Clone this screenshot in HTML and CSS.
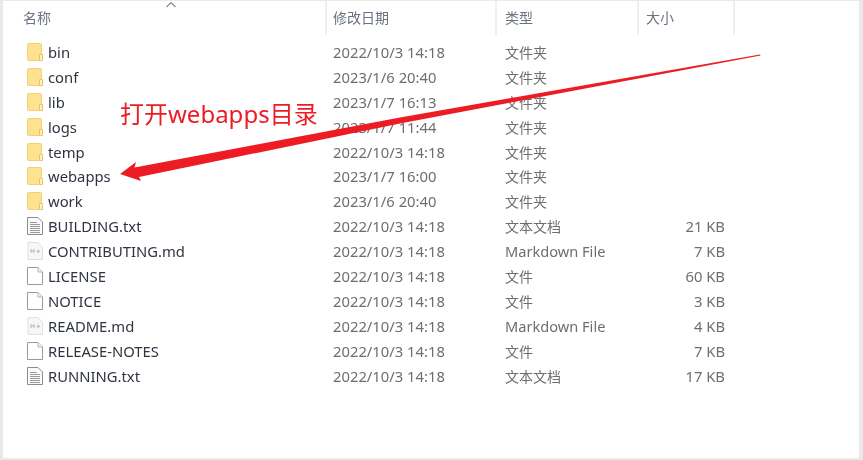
FILE: index.html
```html
<!DOCTYPE html>
<html lang="zh">
<head>
<meta charset="utf-8">
<title>webapps</title>
<link rel="stylesheet" href="styles.css">
</head>
<body>
<svg class="defs" width="0" height="0" aria-hidden="true">
  <symbol id="folder" viewBox="0 0 16 18">
    <path d="M1.5 .5H13.5a1 1 0 0 1 1 1V17.5H1.5a1 1 0 0 1-1-1V1.5a1 1 0 0 1 1-1z" fill="#fde28f" stroke="#f0d078"/>
    <path d="M12.5 17.5V11.5H15.5V17.5z" fill="#fff0c0" stroke="#e8c564"/>
  </symbol>
  <symbol id="txt" viewBox="0 0 16 18">
    <path d="M.5 .5H11L15.5 5V17.5H.5z" fill="#fafafa" stroke="#8d8d8d"/>
    <path d="M3 5.5H10M3 7.5H13M3 9.5H13M3 11.5H13M3 13.5H13M3 15.5H13" stroke="#9a9a9a"/>
  </symbol>
  <symbol id="plain" viewBox="0 0 16 18">
    <path d="M.5 .5H11L15.5 5V17.5H.5z" fill="#fff" stroke="#9a9a9a"/>
    <path d="M11 .5V5H15.5" fill="#f2f2f2" stroke="#b4b4b4"/>
  </symbol>
  <symbol id="md" viewBox="0 0 16 18">
    <path d="M1 .5H11L15.5 5V17.5H1z" fill="#f6f6f6" stroke="#e0e0e0"/>
    <path d="M4 11V7.5L5.5 9.5L7 7.5V11M9.5 9.3H13M11.2 7.6V11" fill="none" stroke="#b5b5b5"/>
  </symbol>
</svg>
<main class="window">
  <header class="head">
    <div class="col-name hcell">名称</div>
    <div class="col-date hcell">修改日期</div>
    <div class="col-type hcell">类型</div>
    <div class="col-size hcell">大小</div>
    <svg class="caret" width="12" height="7" viewBox="0 0 12 7"><path d="M1.5 6L6 1.5L10.500 6" fill="none" stroke="#8a8a8a" stroke-width="1.2"/></svg>
  </header>
  <div class="list">
    <div class="row"><div class="col-name"><svg class="ico"><use href="#folder"/></svg><span>bin</span></div><div class="col-date">2022/10/3 14:18</div><div class="col-type">文件夹</div><div class="col-size"></div></div>
    <div class="row"><div class="col-name"><svg class="ico"><use href="#folder"/></svg><span>conf</span></div><div class="col-date">2023/1/6 20:40</div><div class="col-type">文件夹</div><div class="col-size"></div></div>
    <div class="row"><div class="col-name"><svg class="ico"><use href="#folder"/></svg><span>lib</span></div><div class="col-date">2023/1/7 16:13</div><div class="col-type">文件夹</div><div class="col-size"></div></div>
    <div class="row"><div class="col-name"><svg class="ico"><use href="#folder"/></svg><span>logs</span></div><div class="col-date">2023/1/7 11:44</div><div class="col-type">文件夹</div><div class="col-size"></div></div>
    <div class="row"><div class="col-name"><svg class="ico"><use href="#folder"/></svg><span>temp</span></div><div class="col-date">2022/10/3 14:18</div><div class="col-type">文件夹</div><div class="col-size"></div></div>
    <div class="row"><div class="col-name"><svg class="ico"><use href="#folder"/></svg><span>webapps</span></div><div class="col-date">2023/1/7 16:00</div><div class="col-type">文件夹</div><div class="col-size"></div></div>
    <div class="row"><div class="col-name"><svg class="ico"><use href="#folder"/></svg><span>work</span></div><div class="col-date">2023/1/6 20:40</div><div class="col-type">文件夹</div><div class="col-size"></div></div>
    <div class="row"><div class="col-name"><svg class="ico"><use href="#txt"/></svg><span>BUILDING.txt</span></div><div class="col-date">2022/10/3 14:18</div><div class="col-type">文本文档</div><div class="col-size">21 KB</div></div>
    <div class="row"><div class="col-name"><svg class="ico"><use href="#md"/></svg><span>CONTRIBUTING.md</span></div><div class="col-date">2022/10/3 14:18</div><div class="col-type latin">Markdown File</div><div class="col-size">7 KB</div></div>
    <div class="row"><div class="col-name"><svg class="ico"><use href="#plain"/></svg><span>LICENSE</span></div><div class="col-date">2022/10/3 14:18</div><div class="col-type">文件</div><div class="col-size">60 KB</div></div>
    <div class="row"><div class="col-name"><svg class="ico"><use href="#plain"/></svg><span>NOTICE</span></div><div class="col-date">2022/10/3 14:18</div><div class="col-type">文件</div><div class="col-size">3 KB</div></div>
    <div class="row"><div class="col-name"><svg class="ico"><use href="#md"/></svg><span>README.md</span></div><div class="col-date">2022/10/3 14:18</div><div class="col-type latin">Markdown File</div><div class="col-size">4 KB</div></div>
    <div class="row"><div class="col-name"><svg class="ico"><use href="#plain"/></svg><span>RELEASE-NOTES</span></div><div class="col-date">2022/10/3 14:18</div><div class="col-type">文件</div><div class="col-size">7 KB</div></div>
    <div class="row"><div class="col-name"><svg class="ico"><use href="#txt"/></svg><span>RUNNING.txt</span></div><div class="col-date">2022/10/3 14:18</div><div class="col-type">文本文档</div><div class="col-size">17 KB</div></div>
  </div>
  <div class="note">打开webapps目录</div>
  <svg class="arrow" width="863" height="460" viewBox="0 0 863 460" aria-hidden="true">
    <path d="M120 174L136 162L134.500 167.500L400 117.500L760 54.500L760.500 55.500L400 123.500L139 177L141 181z" fill="#ed1c24"/>
  </svg>
</main>
</body>
</html>
```
FILE: styles.css
```css
* { box-sizing: border-box; }
html, body { margin: 0; padding: 0; }
body {
  width: 863px;
  height: 460px;
  overflow: hidden;
  background: #fff;
  font-family: "Noto Sans", "Noto Sans CJK SC", sans-serif;
  font-size: 14px;
}
.defs { position: absolute; }
.window {
  position: relative;
  width: 863px;
  height: 460px;
  background: #fff;
  border-style: solid;
  border-color: #e9e9e9;
  border-width: 1px 4px 2px 3px;
  filter: blur(0.3px);
}
.head {
  display: flex;
  height: 34px;
  color: #6a7280;
  position: relative;
}
.hcell {
  display: flex;
  align-items: center;
  height: 34px;
  border-right: 2px solid #efefef;
  padding-bottom: 3px;
}
.head .col-name { padding-left: 20px; }
.head .col-date { padding-left: 6px; font-size: 14px; }
.head .col-type { padding-left: 8px; }
.head .col-size { padding-left: 7px; padding-right: 0; font-size: 14px; }
.caret { position: absolute; left: 162px; top: 0; }
.list { padding-top: 4.500px; }
.row {
  display: flex;
  align-items: center;
  height: 24.900px;
  color: #6e6e6e;
}
.col-name { width: 324px; flex: none; display: flex; align-items: center; }
.col-date { width: 170px; flex: none; padding-left: 6px; font-size: 14.800px; }
.col-type { width: 142px; flex: none; padding-left: 8px; }
.col-type.latin { font-size: 14.600px; }
.col-size { width: 96px; flex: none; text-align: right; padding-right: 10px; font-size: 14.800px; }
.row .col-name { padding-left: 24px; color: #2f3540; font-size: 14.800px; }
.ico { width: 16px; height: 18px; margin-right: 5px; flex: none; }
.note {
  position: absolute;
  left: 117px;
  top: 96px;
  color: #ed1c24;
  font-size: 24px;
  line-height: 34px;
  white-space: nowrap;
}
.arrow { position: absolute; left: -3px; top: -1px; pointer-events: none; }
```
